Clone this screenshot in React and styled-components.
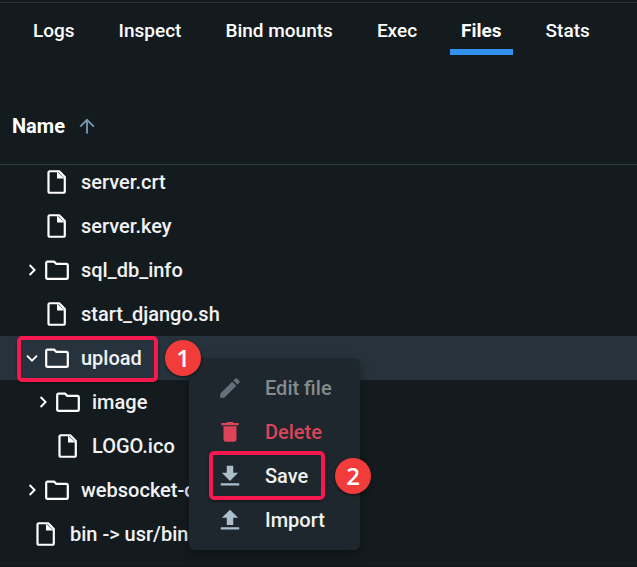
import React from "react";
import styled, { createGlobalStyle, css } from "styled-components";

const GlobalStyle = createGlobalStyle`
  * { box-sizing: border-box; }
  body {
    margin: 0;
    background: #141b1f;
    color: #ffffff;
    font-family: Roboto, "Liberation Sans", sans-serif;
    font-size: 20px;
    line-height: 24px;
  }
  button { font: inherit; color: inherit; background: none; border: 0; padding: 0; cursor: pointer; }
  svg { display: block; flex: none; }
`;

const Page = styled.main`
  min-height: 100vh;
  padding-top: 2px;
  overflow: hidden;
  display: flex;
  flex-direction: column;
  border-bottom: 1px solid #10161c;
`;

const Tabs = styled.nav`
  display: flex;
  gap: 22px;
  padding: 16px 22px 0;
  border-top: 1px solid #2b3338;
`;

const Tab = styled.button`
  && {
    padding: 0 11px 6px;
    border-bottom: 6px solid ${(p) => (p.$active ? "#3391ee" : "transparent")};
    font-size: 19px;
    font-weight: ${(p) => (p.$active ? 700 : 500)};
    white-space: nowrap;
  }
`;

const ListHeader = styled.header`
  display: flex;
  align-items: center;
  padding: 59px 12px 26px;
  border-bottom: 1px solid #2b3d4a;
`;

const SortButton = styled.button`
  && {
    display: flex;
    align-items: center;
    gap: 14px;
    font-weight: 700;
  }
`;

const ListViewport = styled.section`
  flex: 1;
`;

const Tree = styled.ul`
  list-style: none;
  margin: -5px 0 0;
  padding: 0;
`;

const Row = styled.li`
  position: relative;
  display: flex;
  align-items: center;
  height: 44px;
  padding-left: ${(p) => 11 + p.$level * 11}px;
  color: #f1f2f3;
  font-weight: 500;
  white-space: nowrap;
  ${(p) => p.$selected && css`background: #27333c; z-index: 1;`}
`;

const Toggle = styled.button`
  && {
    width: 20px;
    height: 20px;
    margin-right: 3px;
    visibility: ${(p) => (p.$hidden ? "hidden" : "visible")};
  }
`;

const FileName = styled.span`
  margin-left: 12px;
`;

const Menu = styled.div`
  position: absolute;
  left: 189px;
  top: 22px;
  width: 171px;
  padding: 8px 0;
  border-radius: 6px;
  background: #1e272d;
  box-shadow: 0 4px 12px rgba(0, 0, 0, 0.4);
`;

const MenuItem = styled.button`
  && {
    position: relative;
    display: flex;
    align-items: center;
    gap: 22px;
    width: 100%;
    height: 44px;
    padding-left: 28px;
    text-align: left;
    color: ${(p) => p.$color};
  }
`;

const Highlight = styled.span`
  position: absolute;
  border: 4px solid #f6194f;
  border-radius: 5px;
  box-shadow: 0 1px 3px rgba(0, 0, 0, 0.5);
  pointer-events: none;
`;

const RowHighlight = styled(Highlight)`
  left: 17px;
  top: 0;
  width: 141px;
  height: 46px;
`;

const ItemHighlight = styled(Highlight)`
  left: 20px;
  top: -3px;
  width: 116px;
  height: 49px;
`;

const Step = styled.span`
  position: absolute;
  left: ${(p) => p.$left}px;
  top: 4px;
  z-index: 2;
  width: 36px;
  height: 36px;
  border-radius: 50%;
  background: #f23c3c;
  color: #ffffff;
  font: 600 24px/36px "Open Sans", sans-serif;
  text-align: center;
  box-shadow: 0 1px 3px rgba(0, 0, 0, 0.6);
`;

const FileIcon = () => (
  <svg width="24" height="24" viewBox="0 0 24 24" aria-hidden="true">
    <path d="M4.5 1.25h9.7l5.6 5.8v14.2a1.5 1.5 0 0 1-1.5 1.5H5a1.5 1.5 0 0 1-1.5-1.5v-19z" fill="none" stroke="#fff" strokeWidth="2.2" strokeLinejoin="round" />
    <path d="M12 1.5v7h7.6z" fill="#fff" />
  </svg>
);

const FolderIcon = () => (
  <svg width="24" height="24" viewBox="0 0 24 24" aria-hidden="true">
    <path d="M2.4 3.6h6.6l2.4 2.3h10a1.4 1.4 0 0 1 1.4 1.4v12.2a1.4 1.4 0 0 1-1.4 1.4H2.4a1.2 1.2 0 0 1-1.2-1.2V4.8a1.2 1.2 0 0 1 1.2-1.2z" fill="none" stroke="#fff" strokeWidth="2.2" strokeLinejoin="round" />
  </svg>
);

const Chevron = ({ open }) => (
  <svg width="20" height="20" viewBox="0 0 20 20" fill="none" stroke="#fff" strokeWidth="1.9" aria-hidden="true">
    <path d={open ? "M5 7.6l5 5 5-5" : "M7.6 5l5 5-5 5"} />
  </svg>
);

const SortArrow = () => (
  <svg width="16" height="16" viewBox="0 0 16 16" fill="none" stroke="#7794ab" strokeWidth="1.9" aria-hidden="true">
    <path d="M8 15.5V2M1.2 8.6L8 1.8l6.8 6.8" />
  </svg>
);

const menuPaths = {
  edit: "M3 17.25V21h3.75L17.81 9.94l-3.75-3.75L3 17.25zM20.71 7.04a1 1 0 0 0 0-1.41l-2.34-2.34a1 1 0 0 0-1.41 0l-1.83 1.83 3.75 3.75 1.83-1.83z",
  delete: "M6 19c0 1.1.9 2 2 2h8c1.1 0 2-.9 2-2V6.6H6V19zM20 3.8h-4.5l-1-1h-5l-1 1H4v2h16z",
  save: "M19.5 9H15V2.5H9V9H4.5l7.5 7.5L19.5 9zM3.5 18.8v2h17v-2h-17z",
  import: "M9 16.5h6V10h4.500L12 2.500 4.500 10H9v6.500zM3.500 18.800h17v2h-17z",
};

const MenuIcon = ({ name, color }) => (
  <svg width="26" height="26" viewBox="0 0 24 24" fill={color} aria-hidden="true">
    <path d={menuPaths[name]} />
  </svg>
);

const tabs = ["Logs", "Inspect", "Bind mounts", "Exec", "Files", "Stats"];

const files = [
  { name: "server.crt", level: 1 },
  { name: "server.key", level: 1 },
  { name: "sql_db_info", level: 1, folder: true },
  { name: "start_django.sh", level: 1 },
  { name: "upload", level: 1, folder: true, open: true },
  { name: "image", level: 2, folder: true },
  { name: "LOGO.ico", level: 2 },
  { name: "websocket-client", level: 1, folder: true },
  { name: "bin -> usr/bin", level: 0 },
];

const actions = [
  { label: "Edit file", icon: "edit", color: "#858b8f", iconColor: "#65717a", disabled: true },
  { label: "Delete", icon: "delete", color: "#d8455a", iconColor: "#dd4459" },
  { label: "Save", icon: "save", color: "#f1f2f3", iconColor: "#adbecb", step: 2 },
  { label: "Import", icon: "import", color: "#f1f2f3", iconColor: "#adbecb" },
];

function ContextMenu() {
  return (
    <Menu role="menu">
      {actions.map((a) => (
        <MenuItem key={a.label} role="menuitem" $color={a.color} disabled={a.disabled}>
          <MenuIcon name={a.icon} color={a.iconColor} />
          {a.label}
          {a.step && (
            <>
              <ItemHighlight />
              <Step $left={146}>{a.step}</Step>
            </>
          )}
        </MenuItem>
      ))}
    </Menu>
  );
}

export default function App() {
  return (
    <>
      <GlobalStyle />
      <Page>
        <Tabs>
          {tabs.map((t) => (
            <Tab key={t} $active={t === "Files"}>{t}</Tab>
          ))}
        </Tabs>
        <ListHeader>
          <SortButton>
            Name
            <SortArrow />
          </SortButton>
        </ListHeader>
        <ListViewport>
          <Tree>
            {files.map((f) => (
              <Row key={f.name} $level={f.level} $selected={f.open}>
                <Toggle $hidden={!f.folder} aria-label={`Toggle ${f.name}`}>
                  <Chevron open={f.open} />
                </Toggle>
                {f.folder ? <FolderIcon /> : <FileIcon />}
                <FileName>{f.name}</FileName>
                {f.open && (
                  <>
                    <ContextMenu />
                    <RowHighlight />
                    <Step $left={165}>1</Step>
                  </>
                )}
              </Row>
            ))}
          </Tree>
        </ListViewport>
      </Page>
    </>
  );
}
